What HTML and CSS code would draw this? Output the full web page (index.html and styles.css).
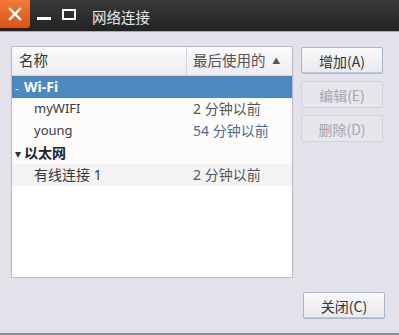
FILE: index.html
```html
<!DOCTYPE html>
<html lang="zh">
<head>
  <meta charset="UTF-8" />
  <title>网络连接</title>
  <link rel="stylesheet" href="styles.css">
</head>
<body>

<div class="window">
  <div class="titlebar">
    <div class="win-btn close-btn">
      <svg width="16" height="16" viewBox="0 0 16 16"><path d="M3 3 L13 13 M13 3 L3 13" stroke="#fff" stroke-width="2.4" stroke-linecap="square"/></svg>
    </div>
    <div class="win-btn min-btn"><span></span></div>
    <div class="win-btn max-btn"><span></span></div>
    <div class="title">网络连接</div>
  </div>

  <div class="content">
    <div class="main-row">
      <div class="list">
        <div class="list-head">
          <div class="col-name">名称</div>
          <div class="col-time">最后使用的 <span class="sort">▲</span></div>
        </div>
        <div class="row group selected">
          <div class="col-name"><span class="arrow">-</span>Wi-Fi</div>
          <div class="col-time"></div>
        </div>
        <div class="row">
          <div class="col-name child latin">myWIFI</div>
          <div class="col-time">2 分钟以前</div>
        </div>
        <div class="row">
          <div class="col-name child latin">young</div>
          <div class="col-time blue">54 分钟以前</div>
        </div>
        <div class="row group">
          <div class="col-name"><span class="arrow tri">▾</span>以太网</div>
          <div class="col-time"></div>
        </div>
        <div class="row alt">
          <div class="col-name child">有线连接 1</div>
          <div class="col-time">2 分钟以前</div>
        </div>
      </div>

      <div class="side-buttons">
        <button class="btn default">增加(A)</button>
        <button class="btn" disabled>编辑(E)</button>
        <button class="btn" disabled>删除(D)</button>
      </div>
    </div>

    <div class="bottom-row">
      <button class="btn default">关闭(C)</button>
    </div>
  </div>
</div>

</body>
</html>
```

FILE: styles.css
```css
* {
  box-sizing: border-box;
}

body {
  margin: 0;
  padding: 0;
  font-family: "Noto Sans", "Noto Sans CJK SC", sans-serif;
  font-size: 14px;
  background-color: #e3e2ea;
}

.window {
  width: 399px;
  height: 335px;
  display: flex;
  flex-direction: column;
  background-color: #e3e2ea;
  border-bottom: 2px solid #8e8e96;
}

.titlebar {
  height: 32px;
  background: linear-gradient(#3a3a3a, #222);
  display: flex;
  align-items: flex-start;
  border-bottom: 1px solid #a9a9b2;
}

.win-btn {
  width: 28px;
  height: 28px;
  display: flex;
  align-items: center;
  justify-content: center;
}

.close-btn {
  background: linear-gradient(#f07a3c, #d9531a);
  border-radius: 0 0 3px 0;
  width: 30px;
}

.min-btn {
  margin-left: 3px;
  width: 22px;
}

.min-btn span {
  display: block;
  width: 14px;
  height: 3px;
  background: #fff;
  margin-top: 8px;
}

.max-btn {
  margin-left: 2px;
  width: 24px;
}

.max-btn span {
  display: block;
  width: 14px;
  height: 11px;
  border: 2px solid #fff;
}

.title {
  color: #e8e8e8;
  font-size: 14.5px;
  margin-left: 11px;
  line-height: 34px;
}

.content {
  flex: 1;
  padding: 14px 14px 14px 11px;
  display: flex;
  flex-direction: column;
}

.main-row {
  display: flex;
  gap: 8px;
  height: 232px;
}

.list {
  background: #fff;
  border: 1px solid #b7b8c6;
  width: 282px;
}

.list-head {
  display: flex;
  height: 29px;
  background: linear-gradient(#fafafc, #eeeef2);
  border-bottom: 1px solid #d6d6dd;
  color: #333;
  font-size: 14.5px;
}

.list-head .col-name,
.list-head .col-time {
  line-height: 27px;
}

.list-head .col-time {
  border-left: 1px solid #d4d4dc;
  padding-left: 6px;
}

.sort {
  font-size: 8px;
  vertical-align: 2px;
  margin-left: 3px;
}

.col-name {
  width: 174px;
  padding-left: 7px;
}

.col-time {
  flex: 1;
  color: #555;
}

.row {
  display: flex;
  height: 22px;
  line-height: 21px;
  color: #3a3a3a;
  background: #fdfcfb;
}

.row .col-time {
  padding-left: 7px;
}

.latin {
  font-size: 13px;
}

.row.alt {
  background: #f3f3f3;
}

.row.group {
  font-weight: bold;
  color: #222;
}

.row.group .col-name {
  padding-left: 3px;
}

.row.selected {
  background: #4b89bf;
  color: #fff;
}

.arrow {
  display: inline-block;
  width: 9px;
  font-weight: normal;
  font-size: 11px;
}

.arrow.tri {
  font-size: 12px;
  color: #333;
}

.child {
  padding-left: 22px;
}

.blue {
  color: #4f6890 !important;
}

.side-buttons {
  display: flex;
  flex-direction: column;
  gap: 7px;
  padding-top: 1px;
}

.btn {
  width: 82px;
  height: 27px;
  margin: 0;
  font-family: "Noto Sans CJK SC", sans-serif;
  font-size: 14px;
  color: #333;
  background: linear-gradient(#f9f9fb, #e9e9ee);
  border: 1px solid #c5c5d0;
  border-radius: 2px;
  padding: 0;
}

.btn.default {
  border-color: #a9b7cd;
  box-shadow: inset 0 -1px 0 #b9c9e0;
}

.btn:disabled {
  color: #a5a5ad;
  background: #e6e6ec;
  border-color: #d2d2da;
}

.bottom-row {
  margin-top: auto;
  display: flex;
  justify-content: flex-end;
}
```
